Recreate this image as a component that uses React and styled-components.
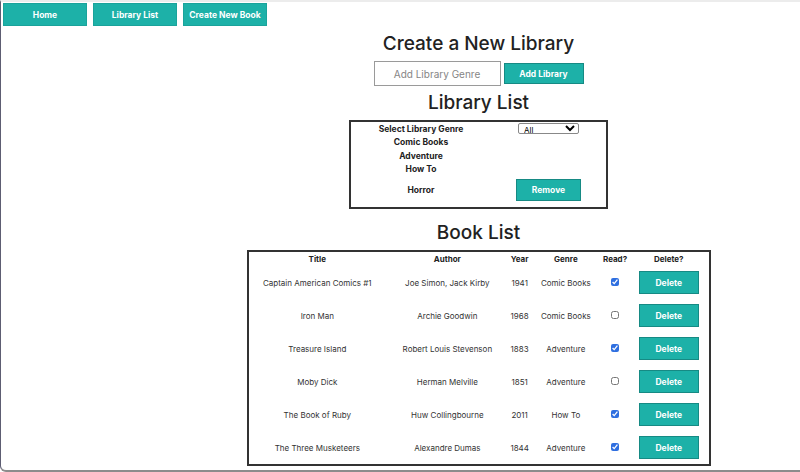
import React, { useState } from "react";
import styled, { createGlobalStyle } from "styled-components";

const GlobalStyle = createGlobalStyle`
  html, body {
    margin: 0;
    padding: 0;
    background: #fff;
  }
  body {
    font-family: Inter, "Liberation Sans", Arial, sans-serif;
    color: #222;
  }
`;

const TEAL = "#1db1a8";

const Frame = styled.div`
  box-sizing: border-box;
  min-height: 472px;
  border-top: 2px solid #ececec;
  border-left: 1px solid #5d5d72;
  border-bottom: 2px solid #8c8c8c;
  border-bottom-left-radius: 6px;
`;

const Nav = styled.nav`
  display: flex;
  gap: 6px;
  padding: 1px 0 0 2px;
`;

const NavButton = styled.button`
  width: 84px;
  height: 23px;
  background: ${TEAL};
  color: #fff;
  border: 1px solid #1aa39b;
  font-family: inherit;
  font-size: 8.5px;
  font-weight: 700;
  cursor: pointer;
  padding: 0;
`;

const Main = styled.main`
  display: flex;
  flex-direction: column;
  align-items: center;
  padding-left: 156px;
`;

const Heading = styled.h1`
  margin: ${(p) => p.$mt || 0}px 0 0;
  font-size: 19px;
  line-height: 24px;
  font-weight: 500;
  color: #222;
`;

const FormRow = styled.div`
  display: flex;
  align-items: center;
  gap: 3px;
  margin-top: 5px;
`;

const GenreInput = styled.input`
  box-sizing: border-box;
  width: 127px;
  height: 25px;
  border: 1px solid #9a9a9a;
  font-family: inherit;
  font-size: 10px;
  text-align: center;
  color: #333;
  &::placeholder {
    color: #858585;
  }
`;

const TealButton = styled.button`
  box-sizing: border-box;
  width: ${(p) => p.$w}px;
  height: ${(p) => p.$h}px;
  background: ${TEAL};
  color: #fff;
  border: 1px solid #168a84;
  font-family: inherit;
  font-size: ${(p) => p.$fs || 8.5}px;
  font-weight: 700;
  padding: 0;
  cursor: pointer;
`;

const LibraryBox = styled.div`
  box-sizing: border-box;
  width: 259px;
  margin-top: 5px;
  border: 2px solid #333;
  padding: 0 0 4px;
  display: grid;
  grid-template-columns: 140px 1fr;
  align-items: center;
  font-size: 8.5px;
  font-weight: 700;
  color: #222;
`;

const Cell = styled.div`
  text-align: center;
  height: ${(p) => p.$h || 13.5}px;
  display: flex;
  align-items: center;
  justify-content: center;
`;

const GenreSelect = styled.select`
  width: 61px;
  height: 11px;
  font-size: 8px;
  font-family: inherit;
  padding: 0 1px;
  border: 1px solid #888;
  border-radius: 2px;
  background: #fff;
`;

const BookTable = styled.table`
  width: 464px;
  margin-top: 5px;
  border: 2px solid #333;
  border-collapse: collapse;
  table-layout: fixed;
  font-size: 8px;
  color: #333;
`;

const Th = styled.th`
  height: 14px;
  padding: 0;
  font-weight: 700;
  color: #222;
  text-align: center;
`;

const Td = styled.td`
  height: 33px;
  padding: 0;
  text-align: center;
`;

const ReadBox = styled.input`
  width: 8px;
  height: 8px;
  margin: 0;
  accent-color: #2f6fe0;
`;

const genres = ["Comic Books", "Adventure", "How To"];

const initialBooks = [
  { title: "Captain American Comics #1", author: "Joe Simon, Jack Kirby", year: 1941, genre: "Comic Books", read: true },
  { title: "Iron Man", author: "Archie Goodwin", year: 1968, genre: "Comic Books", read: false },
  { title: "Treasure Island", author: "Robert Louis Stevenson", year: 1883, genre: "Adventure", read: true },
  { title: "Moby Dick", author: "Herman Melville", year: 1851, genre: "Adventure", read: false },
  { title: "The Book of Ruby", author: "Huw Collingbourne", year: 2011, genre: "How To", read: true },
  { title: "The Three Musketeers", author: "Alexandre Dumas", year: 1844, genre: "Adventure", read: true },
];

const App = () => {
  const [books, setBooks] = useState(initialBooks);

  const toggleRead = (i) => {
    setBooks(books.map((b, j) => (j === i ? { ...b, read: !b.read } : b)));
  };

  return (
    <Frame>
      <GlobalStyle />
      <Nav>
        <NavButton>Home</NavButton>
        <NavButton>Library List</NavButton>
        <NavButton>Create New Book</NavButton>
      </Nav>
      <Main>
        <Heading $mt={6}>Create a New Library</Heading>
        <FormRow>
          <GenreInput placeholder="Add Library Genre" />
          <TealButton $w={80} $h={21}>Add Library</TealButton>
        </FormRow>
        <Heading $mt={5}>Library List</Heading>
        <LibraryBox>
          <Cell>Select Library Genre</Cell>
          <Cell>
            <GenreSelect defaultValue="All">
              <option>All</option>
              {genres.map((g) => (
                <option key={g}>{g}</option>
              ))}
            </GenreSelect>
          </Cell>
          {genres.map((g) => (
            <React.Fragment key={g}>
              <Cell>{g}</Cell>
              <Cell />
            </React.Fragment>
          ))}
          <Cell $h={27}>Horror</Cell>
          <Cell $h={27}>
            <TealButton $w={65} $h={22}>Remove</TealButton>
          </Cell>
        </LibraryBox>
        <Heading $mt={12}>Book List</Heading>
        <BookTable>
          <colgroup>
            <col style={{ width: 138 }} />
            <col style={{ width: 122 }} />
            <col style={{ width: 22 }} />
            <col style={{ width: 70 }} />
            <col style={{ width: 28 }} />
            <col style={{ width: 80 }} />
          </colgroup>
          <thead>
            <tr>
              <Th>Title</Th>
              <Th>Author</Th>
              <Th>Year</Th>
              <Th>Genre</Th>
              <Th>Read?</Th>
              <Th>Delete?</Th>
            </tr>
          </thead>
          <tbody>
            {books.map((b, i) => (
              <tr key={b.title}>
                <Td>{b.title}</Td>
                <Td>{b.author}</Td>
                <Td>{b.year}</Td>
                <Td>{b.genre}</Td>
                <Td>
                  <ReadBox type="checkbox" checked={b.read} onChange={() => toggleRead(i)} />
                </Td>
                <Td>
                  <TealButton $w={60} $h={23}>Delete</TealButton>
                </Td>
              </tr>
            ))}
          </tbody>
        </BookTable>
      </Main>
    </Frame>
  );
};

export default App;
